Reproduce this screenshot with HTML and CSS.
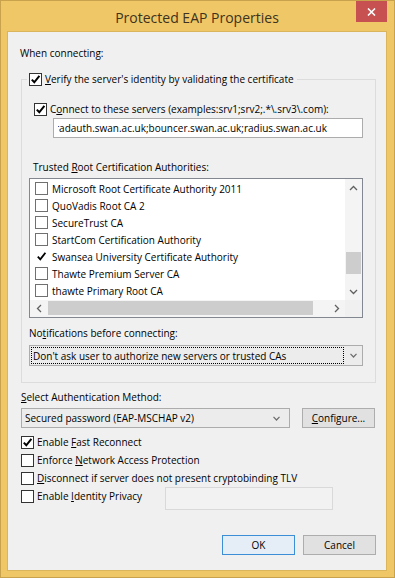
FILE: index.html
```html
<!DOCTYPE html>
<html lang="en">
<head>
  <meta charset="UTF-8">
  <title>Protected EAP Properties</title>
  <link rel="stylesheet" href="styles.css">
</head>
<body>
  <div class="window">
    <div class="titlebar">
      <span class="title">Protected EAP Properties</span>
      <div class="close">
        <svg width="9" height="8" viewBox="0 0 9 8"><path d="M1 0.5 L8 7.5 M8 0.5 L1 7.5" stroke="#fff" stroke-width="1.6"/></svg>
      </div>
    </div>

    <div class="client">
      <p class="top-label">When connecting:</p>

      <div class="group">
        <div class="group-title check-row">
          <span class="cb"><svg width="11" height="11" viewBox="0 0 11 11"><path d="M1.8 5.6 L4.3 8.3 L9.4 1.8" fill="none" stroke="#000" stroke-width="2"/></svg></span>
          <span><u>V</u>erify the server's identity by validating the certificate</span>
        </div>

        <div class="check-row connect">
          <span class="cb"><svg width="11" height="11" viewBox="0 0 11 11"><path d="M1.8 5.6 L4.3 8.3 L9.4 1.8" fill="none" stroke="#000" stroke-width="2"/></svg></span>
          <span>C<u>o</u>nnect to these servers (examples:srv1;srv2;.*\.srv3\.com):</span>
        </div>

        <div class="textbox servers">
          <div class="clip"><span class="scrolled">radauth.swan.ac.uk;bouncer.swan.ac.uk;radius.swan.ac.uk</span></div>
        </div>

        <p class="field-label trusted">Trusted <u>R</u>oot Certification Authorities:</p>

        <div class="listbox">
          <div class="list-items">
            <div class="list-row"><span class="cb small"></span>Microsoft Root Certificate Authority 2011</div>
            <div class="list-row"><span class="cb small"></span>QuoVadis Root CA 2</div>
            <div class="list-row"><span class="cb small"></span>SecureTrust CA</div>
            <div class="list-row"><span class="cb small"></span>StartCom Certification Authority</div>
            <div class="list-row"><span class="cb small bare"><svg width="11" height="11" viewBox="0 0 11 11"><path d="M1.8 5.6 L4.3 8.3 L9.4 1.8" fill="none" stroke="#000" stroke-width="1.8"/></svg></span>Swansea University Certificate Authority</div>
            <div class="list-row"><span class="cb small"></span>Thawte Premium Server CA</div>
            <div class="list-row"><span class="cb small"></span>thawte Primary Root CA</div>
          </div>
          <div class="vscroll">
            <div class="arrow"><svg width="9" height="6" viewBox="0 0 9 6"><path d="M1 5 L4.5 1.5 L8 5" fill="none" stroke="#606060" stroke-width="1.3"/></svg></div>
            <div class="track"><div class="vthumb"></div></div>
            <div class="arrow"><svg width="9" height="6" viewBox="0 0 9 6"><path d="M1 1 L4.5 4.5 L8 1" fill="none" stroke="#606060" stroke-width="1.3"/></svg></div>
          </div>
          <div class="hscroll">
            <div class="arrow"><svg width="6" height="9" viewBox="0 0 6 9"><path d="M5 1 L1.5 4.5 L5 8" fill="none" stroke="#606060" stroke-width="1.3"/></svg></div>
            <div class="track"><div class="hthumb"></div></div>
            <div class="arrow"><svg width="6" height="9" viewBox="0 0 6 9"><path d="M1 1 L4.5 4.5 L1 8" fill="none" stroke="#606060" stroke-width="1.3"/></svg></div>
          </div>
          <div class="corner"></div>
        </div>

        <p class="field-label notify">No<u>t</u>ifications before connecting:</p>

        <div class="combo notify-combo">
          <span class="focus">Don't ask user to authorize new servers or trusted CAs</span>
          <svg class="drop" width="7" height="5" viewBox="0 0 7 5"><path d="M0.5 0.8 L3.5 4 L6.5 0.8" fill="none" stroke="#6d6d6d" stroke-width="1.2"/></svg>
        </div>
      </div>

      <p class="field-label method"><u>S</u>elect Authentication Method:</p>

      <div class="auth-row">
        <div class="combo auth-combo">
          <span>Secured password (EAP-MSCHAP v2)</span>
          <svg class="drop" width="7" height="5" viewBox="0 0 7 5"><path d="M0.5 0.8 L3.5 4 L6.5 0.8" fill="none" stroke="#6d6d6d" stroke-width="1.2"/></svg>
        </div>
        <div class="button configure"><u>C</u>onfigure...</div>
      </div>

      <div class="options">
        <div class="check-row option">
          <span class="cb"><svg width="11" height="11" viewBox="0 0 11 11"><path d="M1.8 5.6 L4.3 8.3 L9.4 1.8" fill="none" stroke="#000" stroke-width="2"/></svg></span>
          <span>Enable <u>F</u>ast Reconnect</span>
        </div>
        <div class="check-row option">
          <span class="cb"></span>
          <span>Enforce <u>N</u>etwork Access Protection</span>
        </div>
        <div class="check-row option">
          <span class="cb"></span>
          <span><u>D</u>isconnect if server does not present cryptobinding TLV</span>
        </div>
        <div class="identity-row">
          <div class="check-row option identity">
            <span class="cb"></span>
            <span>Enable <u>I</u>dentity Privacy</span>
          </div>
          <div class="textbox disabled"></div>
        </div>
      </div>

      <div class="buttons">
        <div class="button default">OK</div>
        <div class="button">Cancel</div>
      </div>
    </div>
  </div>
</body>
</html>
```

FILE: styles.css
```css
* { margin: 0; padding: 0; box-sizing: border-box; }
body { font-family: 'Open Sans', 'Noto Sans', sans-serif; font-size: 10px; color: #000; background: #f0c767; }
u { text-decoration: underline; text-underline-offset: 1px; }

.window { width: 395px; height: 578px; border: 1px solid #c9a24e; background: #f0c767; padding: 0 8px 7px 7px; display: flex; flex-direction: column; }
.titlebar { height: 31px; position: relative; display: flex; align-items: center; justify-content: center; padding-top: 2px; }
.title { font-size: 14px; color: #3d3320; }
.close { position: absolute; top: 0; right: -1px; width: 31px; height: 21px; background: #c75050; display: flex; align-items: center; justify-content: center; }

.client { flex: 1; background: #f0f0f0; box-shadow: 0 0 0 1px #dab55c; padding: 14px 10px 15px 13px; display: flex; flex-direction: column; }
.top-label { line-height: 14px; margin-left: -1px; }

.cb { width: 13px; height: 13px; border: 1px solid #333; background: #fff; display: inline-flex; align-items: center; justify-content: center; flex: none; }
.cb.small { border-color: #707070; }
.cb.bare { border-color: transparent; background: transparent; }
.check-row { display: flex; align-items: center; gap: 3px; line-height: 14px; height: 14px; }

.group { margin-top: 19px; height: 304px; border: 1px solid #dcdcdc; padding: 0 11px 0 7px; display: flex; flex-direction: column; align-items: flex-start; }
.group-title { margin-top: -8px; margin-left: -2px; padding: 0 3px 0 2px; background: #f0f0f0; }
.connect { margin-top: 16px; margin-left: 5px; }

.textbox { border: 1px solid #acacac; background: #fff; overflow: hidden; white-space: nowrap; }
.servers { margin-top: 2px; margin-left: 24px; width: 310px; height: 20px; line-height: 18px; padding-left: 4px; }
.clip { overflow: hidden; }
.scrolled { display: inline-block; margin-left: -3px; }

.field-label { line-height: 14px; }
.trusted { margin-top: 22px; margin-left: 4px; }

.listbox { margin-top: 4px; width: 334px; height: 140px; border: 1px solid #828790; background: #fff; display: grid; grid-template-columns: 1fr 17px; grid-template-rows: 1fr 17px; }
.list-items { padding: 1px 0 0 5px; overflow: hidden; }
.list-row { height: 17px; display: flex; align-items: center; gap: 4px; white-space: nowrap; }
.vscroll { display: flex; flex-direction: column; background: #f4f4f4; }
.hscroll { display: flex; background: #f4f4f4; }
.arrow { width: 17px; height: 17px; display: flex; align-items: center; justify-content: center; flex: none; }
.track { flex: 1; display: flex; }
.vscroll .track { flex-direction: column; }
.vthumb { margin-top: 56px; margin-left: 1px; width: 15px; height: 22px; background: #cdcdcd; }
.hthumb { margin-left: 1px; margin-top: 1px; width: 265px; height: 14px; background: #cdcdcd; }
.corner { background: #f0f0f0; }

.notify { margin-top: 8px; }
.combo { border: 1px solid #acacac; background: #ececec; display: flex; align-items: center; position: relative; white-space: nowrap; }
.combo .drop { margin-left: auto; }
.notify-combo { margin-top: 5px; width: 334px; height: 21px; padding: 0 5px 0 1px; }
.focus { flex: 0 0 313px; height: 17px; line-height: 16px; border: 1px dotted #000; padding-left: 1px; }
.method { margin-top: 7px; }

.auth-row { margin-top: 4px; display: flex; gap: 12px; }
.auth-combo { width: 269px; height: 20px; padding: 0 9px 0 3px; }
.button { height: 20px; width: 73px; border: 1px solid #adadad; background: #e1e1e1; display: flex; align-items: center; justify-content: center; }

.options { margin-top: 5px; display: flex; flex-direction: column; }
.option { height: 18px; }
.identity-row { display: flex; align-items: flex-start; }
.identity { flex: 0 0 144px; }
.disabled { width: 168px; height: 23px; background: #f2f2f2; border-color: #d9d9d9; }

.buttons { margin-top: auto; display: flex; justify-content: flex-end; gap: 8px; }
.button.default { border-color: #3c8fd6; background: #e5eef6; }
```
